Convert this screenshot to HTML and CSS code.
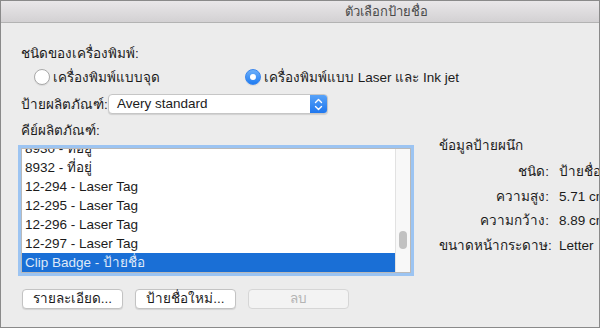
FILE: index.html
```html
<!DOCTYPE html>
<html>
<head>
  <meta charset="UTF-8">
  <meta name="viewport" content="width=device-width, initial-scale=1.0">
  <title>ตัวเลือกป้ายชื่อ</title>
  <link rel="stylesheet" href="styles.css">
</head>
<body>
  <main class="window">
    <header class="titlebar">ตัวเลือกป้ายชื่อ</header>

    <div class="content">
      <div class="group-label">ชนิดของเครื่องพิมพ์:</div>

      <div class="radio-row">
        <label class="radio-option first">
          <span class="radio"></span>
          <span>เครื่องพิมพ์แบบจุด</span>
        </label>
        <label class="radio-option">
          <span class="radio checked"></span>
          <span>เครื่องพิมพ์แบบ Laser และ Ink jet</span>
        </label>
      </div>

      <div class="field-row">
        <span class="field-label">ป้ายผลิตภัณฑ์:</span>
        <div class="popup">
          <span class="popup-text">Avery standard</span>
          <span class="stepper">
            <svg width="9" height="13" viewBox="0 0 9 13">
              <path d="M1.5 4.5 L4.5 1.5 L7.5 4.5" fill="none" stroke="#fff" stroke-width="1.4" stroke-linecap="round" stroke-linejoin="round"/>
              <path d="M1.5 8.5 L4.5 11.5 L7.5 8.5" fill="none" stroke="#fff" stroke-width="1.4" stroke-linecap="round" stroke-linejoin="round"/>
            </svg>
          </span>
        </div>
      </div>

      <section class="main">
        <div class="left">
          <div class="group-label key-label">คีย์ผลิตภัณฑ์:</div>

          <div class="list">
            <ul class="rows">
              <li>8930 - ที่อยู่</li>
              <li>8932 - ที่อยู่</li>
              <li>12-294 - Laser Tag</li>
              <li>12-295 - Laser Tag</li>
              <li>12-296 - Laser Tag</li>
              <li>12-297 - Laser Tag</li>
              <li class="selected">Clip Badge - ป้ายชื่อ</li>
            </ul>
            <div class="scrollbar">
              <div class="thumb"></div>
            </div>
          </div>

          <div class="button-group">
            <button class="btn">รายละเอียด...</button>
            <button class="btn">ป้ายชื่อใหม่...</button>
            <button class="btn" disabled>ลบ</button>
          </div>
        </div>

        <div class="info">
          <div class="info-title">ข้อมูลป้ายผนึก</div>
          <dl class="info-grid">
            <dt>ชนิด:</dt>
            <dd>ป้ายชื่อ</dd>
            <dt>ความสูง:</dt>
            <dd>5.71 cm</dd>
            <dt>ความกว้าง:</dt>
            <dd>8.89 cm</dd>
            <dt>ขนาดหน้ากระดาษ:</dt>
            <dd>Letter</dd>
          </dl>
        </div>
      </section>
    </div>
  </main>
</body>
</html>
```

FILE: styles.css
```css
* {
  box-sizing: border-box;
}

body {
  width: 600px;
  height: 328px;
  margin: 0;
  overflow: hidden;
  font-family: 'Liberation Sans', 'Noto Sans', sans-serif;
  font-size: 13.5px;
  color: #1b1b1b;
}

.window {
  display: flex;
  flex-direction: column;
  width: 600px;
  height: 328px;
  border: 1px solid #8a8a8a;
  background-color: #ececec;
  overflow: hidden;
}

.titlebar {
  flex: none;
  height: 22px;
  padding-left: 172px;
  border-bottom: 1px solid #b3b3b3;
  background: linear-gradient(#e9e7e9, #d3d1d3);
  color: #4a4a4a;
  font-size: 13px;
  line-height: 21px;
  text-align: center;
  white-space: nowrap;
}

.content {
  display: flex;
  flex-direction: column;
  padding-left: 20px;
}

.group-label {
  height: 16px;
  line-height: 16px;
  margin-top: 23px;
  white-space: nowrap;
}

/* radios */
.radio-row {
  display: flex;
  align-items: center;
  height: 18px;
  margin-top: 6px;
  padding-left: 13px;
}

.radio-option {
  display: flex;
  align-items: center;
  gap: 3px;
  white-space: nowrap;
}

.radio-option.first {
  width: 211px;
}

.radio {
  width: 16px;
  height: 16px;
  border-radius: 50%;
  border: 1px solid #a9a9a9;
  background-color: #fff;
  box-shadow: 0 1px 1px rgba(0, 0, 0, 0.08);
}

.radio.checked {
  display: flex;
  align-items: center;
  justify-content: center;
  border-color: #3a86ee;
  background: linear-gradient(#6cb0fa, #1f7cf2);
}

.radio.checked::after {
  content: '';
  width: 6px;
  height: 6px;
  border-radius: 50%;
  background-color: #fff;
}

/* popup */
.field-row {
  display: flex;
  align-items: center;
  height: 20px;
  margin-top: 8px;
}

.field-label {
  width: 87px;
  white-space: nowrap;
}

.popup {
  display: flex;
  width: 220px;
  height: 20px;
  border: 1px solid #c6c6c6;
  border-radius: 4px;
  background-color: #fff;
  box-shadow: 0 1px 1px rgba(0, 0, 0, 0.12);
  overflow: hidden;
}

.popup-text {
  flex: 1;
  padding-left: 8px;
  line-height: 18px;
}

.stepper {
  display: flex;
  align-items: center;
  justify-content: center;
  width: 17px;
  background: linear-gradient(#57a2f8, #1f77ee);
}

/* main area */
.main {
  display: flex;
}

.left {
  display: flex;
  flex-direction: column;
}

.key-label {
  margin-top: 9px;
}

.list {
  display: flex;
  width: 390px;
  height: 125px;
  margin-top: 9px;
  border: 1px solid #b9b9b9;
  background-color: #fff;
  box-shadow: 0 0 0 3px #9cc4f2;
  overflow: hidden;
}

.rows {
  flex: 1;
  margin: -10px 0 0;
  padding: 0;
  list-style: none;
}

.rows li {
  height: 19px;
  padding-left: 3px;
  line-height: 19px;
  white-space: nowrap;
}

.rows li.selected {
  background-color: #1a6fd6;
  color: #dfe9f8;
}

.scrollbar {
  width: 15px;
  border-left: 1px solid #e2e2e2;
  background-color: #f8f8f8;
}

.thumb {
  width: 8px;
  height: 18px;
  margin: 82px 0 0 3px;
  border-radius: 4px;
  background-color: #c2c2c2;
}

.button-group {
  display: flex;
  gap: 12px;
  margin-top: 16px;
  padding-left: 1px;
}

.btn {
  width: 101px;
  height: 20px;
  padding: 0;
  border: 1px solid #c3c3c3;
  border-radius: 4px;
  background-color: #fff;
  box-shadow: 0 1px 1px rgba(0, 0, 0, 0.1);
  color: #1b1b1b;
  font-family: inherit;
  font-size: 13.5px;
  line-height: 18px;
}

.btn:disabled {
  border-color: #d6d6d6;
  background-color: #f3f3f3;
  box-shadow: none;
  color: #b4b4b4;
}

/* info panel */
.info {
  margin-left: 28px;
  padding-top: 24px;
  white-space: nowrap;
}

.info-title {
  height: 16px;
  line-height: 16px;
}

.info-grid {
  display: grid;
  grid-template-columns: 110px auto;
  grid-auto-rows: 24.5px;
  column-gap: 10px;
  margin: 6px 0 0;
  line-height: 24px;
}

.info-grid dt {
  text-align: right;
}

.info-grid dd {
  margin: 0;
}
```
